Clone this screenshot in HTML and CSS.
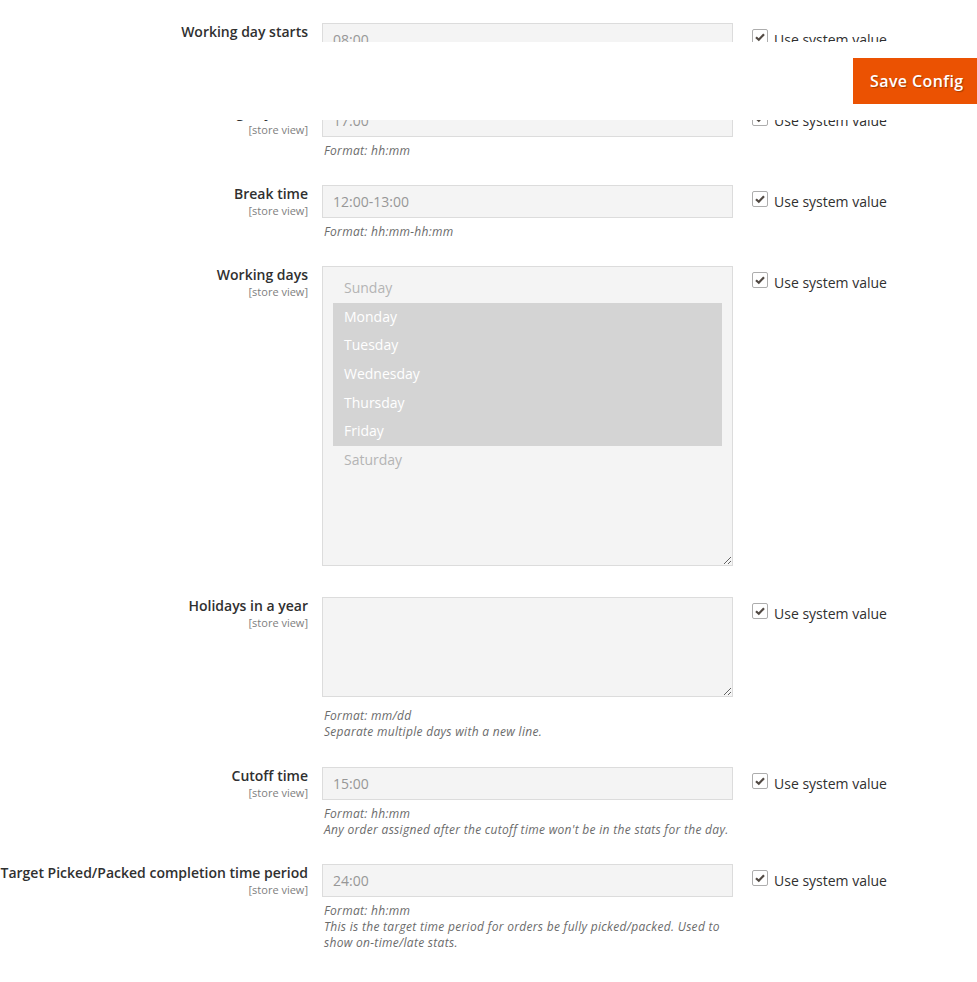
FILE: index.html
```html
<!DOCTYPE html>
<html lang="en">
<head>
<meta charset="utf-8">
<title>Configuration</title>
<link rel="stylesheet" href="styles.css">
</head>
<body>
<main class="config">
  <div class="field">
    <div class="label"><span class="title">Working day starts</span><span class="scope">[store view]</span></div>
    <div class="value">
      <input class="control" type="text" value="08:00" disabled>
      <p class="note">Format: hh:mm</p>
    </div>
    <label class="use-default"><span class="check"><svg viewBox="0 0 16 16" width="16" height="16"><path d="M4 8.2 L6.8 10.8 L12 5.2" /></svg></span><span class="use-text">Use system value</span></label>
  </div>

  <div class="field">
    <div class="label"><span class="title">Working day ends</span><span class="scope">[store view]</span></div>
    <div class="value">
      <input class="control" type="text" value="17:00" disabled>
      <p class="note">Format: hh:mm</p>
    </div>
    <label class="use-default"><span class="check"><svg viewBox="0 0 16 16" width="16" height="16"><path d="M4 8.2 L6.8 10.8 L12 5.2" /></svg></span><span class="use-text">Use system value</span></label>
  </div>

  <div class="field">
    <div class="label"><span class="title">Break time</span><span class="scope">[store view]</span></div>
    <div class="value">
      <input class="control" type="text" value="12:00-13:00" disabled>
      <p class="note">Format: hh:mm-hh:mm</p>
    </div>
    <label class="use-default"><span class="check"><svg viewBox="0 0 16 16" width="16" height="16"><path d="M4 8.2 L6.8 10.8 L12 5.2" /></svg></span><span class="use-text">Use system value</span></label>
  </div>

  <div class="field field-list">
    <div class="label"><span class="title">Working days</span><span class="scope">[store view]</span></div>
    <div class="value">
      <div class="multiselect" role="listbox" aria-multiselectable="true" aria-disabled="true">
        <div class="option">Sunday</div>
        <div class="option selected">Monday</div>
        <div class="option selected">Tuesday</div>
        <div class="option selected">Wednesday</div>
        <div class="option selected">Thursday</div>
        <div class="option selected">Friday</div>
        <div class="option">Saturday</div>
      </div>
    </div>
    <label class="use-default"><span class="check"><svg viewBox="0 0 16 16" width="16" height="16"><path d="M4 8.2 L6.8 10.8 L12 5.2" /></svg></span><span class="use-text">Use system value</span></label>
  </div>

  <div class="field">
    <div class="label"><span class="title">Holidays in a year</span><span class="scope">[store view]</span></div>
    <div class="value">
      <textarea class="control area" disabled></textarea>
      <p class="note">Format: mm/dd<br>Separate multiple days with a new line.</p>
    </div>
    <label class="use-default"><span class="check"><svg viewBox="0 0 16 16" width="16" height="16"><path d="M4 8.2 L6.8 10.8 L12 5.2" /></svg></span><span class="use-text">Use system value</span></label>
  </div>

  <div class="field">
    <div class="label"><span class="title">Cutoff time</span><span class="scope">[store view]</span></div>
    <div class="value">
      <input class="control" type="text" value="15:00" disabled>
      <p class="note">Format: hh:mm<br>Any order assigned after the cutoff time won't be in the stats for the day.</p>
    </div>
    <label class="use-default"><span class="check"><svg viewBox="0 0 16 16" width="16" height="16"><path d="M4 8.2 L6.8 10.8 L12 5.2" /></svg></span><span class="use-text">Use system value</span></label>
  </div>

  <div class="field">
    <div class="label"><span class="title">Target Picked/Packed completion time period</span><span class="scope">[store view]</span></div>
    <div class="value">
      <input class="control" type="text" value="24:00" disabled>
      <p class="note">Format: hh:mm<br>This is the target time period for orders be fully picked/packed. Used to show on-time/late stats.</p>
    </div>
    <label class="use-default"><span class="check"><svg viewBox="0 0 16 16" width="16" height="16"><path d="M4 8.2 L6.8 10.8 L12 5.2" /></svg></span><span class="use-text">Use system value</span></label>
  </div>
</main>

<header class="page-actions">
  <button class="action-primary" type="button">Save Config</button>
</header>
</body>
</html>
```

FILE: styles.css
```css
* {
  box-sizing: border-box;
}

html,
body {
  margin: 0;
  background: #ffffff;
}

body {
  font-family: "Open Sans", "Liberation Sans", sans-serif;
  color: #303030;
  font-size: 14px;
}

/* config form: label | value | use-default */
.config {
  padding-top: 23px;
}

.field {
  display: grid;
  grid-template-columns: 322px 411px auto;
  align-items: start;
  margin-bottom: 26px;
}

.field-list {
  margin-bottom: 31px;
}

.label {
  padding-right: 14px;
  text-align: right;
}

.title {
  display: block;
  font-weight: 600;
  font-size: 14px;
  line-height: 18px;
  color: #303030;
}

.scope {
  display: block;
  font-size: 11px;
  line-height: 15px;
  color: #808080;
}

.value {
  min-width: 0;
}

.control {
  display: block;
  width: 100%;
  height: 33px;
  margin: 0;
  padding: 6px 10px;
  border: 1px solid #dcdcdc;
  border-radius: 0;
  background: #f4f4f4;
  font-family: inherit;
  font-size: 14px;
  line-height: 19px;
  color: #979797;
  -webkit-text-fill-color: #979797;
  opacity: 1;
}

.area {
  height: 100px;
  resize: vertical;
  margin-bottom: 11px;
}

.note {
  margin: 6px 0 0;
  padding-left: 2px;
  font-size: 12px;
  letter-spacing: 0.3px;
  line-height: 16px;
  font-style: italic;
  color: #6b6b6b;
}

.area + .note {
  margin-bottom: 1px;
}

/* multiple select list */
.multiselect {
  height: 300px;
  padding: 7px 10px 5px;
  border: 1px solid #dcdcdc;
  background: #f4f4f4;
  overflow: hidden;
  resize: vertical;
}

.option {
  padding: 5px 11px;
  line-height: 18.67px;
  font-size: 14px;
  color: #b4b4b4;
}

.option.selected {
  background: #d4d4d4;
  color: #ffffff;
}

/* use system value checkbox */
.use-default {
  display: flex;
  align-items: flex-start;
  gap: 6px;
  padding-top: 6px;
  padding-left: 19px;
  font-size: 14px;
  line-height: 19px;
  color: #303030;
  white-space: nowrap;
}

.use-text {
  margin-top: 1px;
}

.check {
  flex: none;
  width: 16px;
  height: 16px;
  border: 1px solid #adadad;
  border-radius: 2px;
  background: #ffffff;
  display: flex;
  align-items: center;
  justify-content: center;
}

.check svg {
  display: block;
  margin: -1px;
}

.check path {
  fill: none;
  stroke: #514943;
  stroke-width: 2.2;
  stroke-linecap: butt;
  stroke-linejoin: miter;
}

/* sticky page actions bar */
.page-actions {
  position: fixed;
  top: 42px;
  left: 0;
  right: 0;
  height: 78px;
  background: #ffffff;
}

.action-primary {
  position: absolute;
  top: 16px;
  left: 853px;
  height: 46px;
  padding: 0 17px;
  border: 0;
  border-radius: 0;
  background: #eb5202;
  color: #ffffff;
  font-family: "Open Sans", "Liberation Sans", sans-serif;
  font-size: 16px;
  font-weight: 600;
  letter-spacing: 0.4px;
  line-height: 46px;
  text-shadow: 1px 1px 1px rgba(0, 0, 0, 0.3);
  white-space: nowrap;
}
```
